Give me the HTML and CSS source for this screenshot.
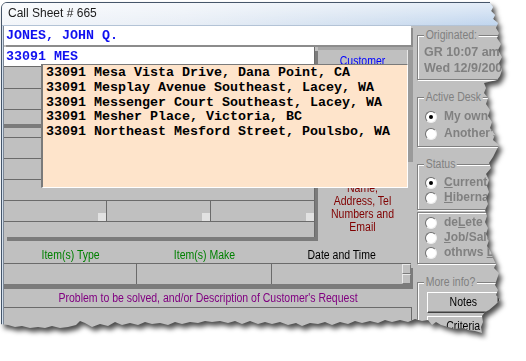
FILE: index.html
```html
<!DOCTYPE html>
<html>
<head>
<meta charset="utf-8">
<title>Call Sheet # 665</title>
<link rel="stylesheet" href="styles.css">
</head>
<body>
<div class="stage">
  <div class="window">
    <div class="frame">
      <div class="titlebar"><span class="title">Call Sheet # 665</span></div>
      <div class="client">
        <div class="main">
          <div class="name-field">JONES, JOHN Q.</div>
          <div class="row2">
            <div class="leftbox">
              <div class="addr-field">33091 MES</div>
              <div class="rows">
                <div class="r ra"></div>
                <div class="r rb"></div>
                <div class="r rc"></div>
                <div class="r band"></div>
                <div class="r rd"></div>
                <div class="r re"></div>
                <div class="r re"></div>
                <div class="r re"></div>
                <div class="r rh">
                  <div class="cell"><span class="sq"></span></div>
                  <div class="cell"><span class="sq"></span></div>
                  <div class="cell last"><span class="sq"></span></div>
                </div>
                <div class="r ri"></div>
              </div>
            </div>
            <div class="cust-panel">
              <div class="cust-text">
                <div class="cust-link">Customer</div>
                <div class="cust-desc">Name,<br>Address, Tel<br>Numbers and<br>Email</div>
              </div>
              <div class="cust-edge"></div>
            </div>
          </div>
          <div class="labels">
            <span class="lab l1 green"><span class="nw">Item(s) Type</span></span>
            <span class="lab l2 green"><span class="nw">Item(s) Make</span></span>
            <span class="lab l3"><span class="nw">Date and Time</span></span>
          </div>
          <div class="fields">
            <div class="fcell f1"></div>
            <div class="fcell f2"></div>
            <div class="fcell f3"><div class="spin"><span></span><span></span></div></div>
          </div>
          <div class="problem-label"><span class="nw">Problem to be solved, and/or Description of Customer's Request</span></div>
          <div class="problem-box"></div>
        </div>
        <div class="side">
          <div class="group g1">
            <span class="glabel">Originated:</span>
            <div class="orig">GR 10:07 am</div>
            <div class="orig">Wed 12/9/2009</div>
          </div>
          <div class="group g2">
            <span class="glabel">Active Desk</span>
            <div class="radio r17"><span class="dot on"></span><span class="rl">My own</span></div>
            <div class="radio r17"><span class="dot"></span><span class="rl">Another's</span></div>
          </div>
          <div class="group g3">
            <span class="glabel">Status</span>
            <div class="radio"><span class="dot on"></span><span class="rl"><u>C</u>urrent</span></div>
            <div class="radio"><span class="dot"></span><span class="rl"><u>H</u>ibernate</span></div>
          </div>
          <div class="group g4">
            <div class="radio"><span class="dot"></span><span class="rl">de<u>L</u>ete</span></div>
            <div class="radio"><span class="dot"></span><span class="rl"><u>J</u>ob/Sale</span></div>
            <div class="radio"><span class="dot"></span><span class="rl">othrws <u>D</u>one</span></div>
          </div>
          <div class="group g5">
            <span class="glabel">More info?</span>
            <div class="btn"><span class="nw">Notes</span></div>
            <div class="btn"><span class="nw">Criteria</span></div>
          </div>
        </div>
      </div>
      <div class="dropdown">
        <div class="opt">33091 Mesa Vista Drive, Dana Point, CA</div>
        <div class="opt">33091 Mesplay Avenue Southeast, Lacey, WA</div>
        <div class="opt">33091 Messenger Court Southeast, Lacey, WA</div>
        <div class="opt">33091 Mesher Place, Victoria, BC</div>
        <div class="opt">33091 Northeast Mesford Street, Poulsbo, WA</div>
      </div>
    </div>
  </div>
</div>
</body>
</html>
```

FILE: styles.css
```css
html, body {
  margin: 0;
  padding: 0;
  background: #fff;
}
body {
  width: 526px;
  height: 361px;
  overflow: hidden;
}
.stage {
  width: 526px;
  height: 361px;
  filter: drop-shadow(3px 4px 2.5px rgba(0, 0, 0, 0.7));
}
.window {
  width: 526px;
  height: 361px;
  box-sizing: border-box;
  padding: 2px 0 0 1px;
  clip-path: polygon(0px 0px, 490px 0px, 490px 3px, 493px 7px, 491px 11px, 495px 15px, 493px 19px, 498px 23px, 496px 28px, 499px 33px, 497px 38px, 501px 44px, 498px 50px, 502px 57px, 499px 63px, 502px 70px, 500px 76px, 497px 80px, 484px 83px, 486px 88px, 484px 93px, 488px 98px, 486px 104px, 490px 110px, 488px 116px, 492px 122px, 490px 128px, 495px 134px, 493px 140px, 499px 145px, 496px 151px, 493px 157px, 489px 163px, 491px 168px, 486px 174px, 489px 180px, 487px 186px, 489px 192px, 486px 198px, 488px 204px, 485px 210px, 487px 216px, 485px 222px, 488px 228px, 486px 234px, 489px 240px, 487px 246px, 491px 252px, 493px 258px, 496px 264px, 494px 268px, 499px 273px, 497px 279px, 495px 285px, 498px 290px, 496px 295px, 500px 300px, 495px 305px, 489px 310px, 485px 312px, 482px 316px, 483px 322px, 481px 327px, 482px 333px, 475px 331px, 468px 330px, 462px 328px, 455px 329px, 448px 327px, 441px 325px, 436px 322px, 432px 325px, 428px 320px, 422px 321px, 415px 319px, 408px 322px, 400px 320px, 392px 322px, 385px 320px, 378px 323px, 370px 321px, 362px 323px, 355px 321px, 348px 324px, 340px 322px, 332px 325px, 325px 322px, 318px 324px, 310px 323px, 302px 326px, 296px 323px, 288px 325px, 280px 322px, 272px 324px, 265px 322px, 258px 324px, 250px 321px, 242px 324px, 235px 321px, 228px 323px, 220px 321px, 212px 322px, 205px 321px, 198px 323px, 190px 322px, 182px 324px, 175px 322px, 168px 325px, 160px 323px, 152px 324px, 145px 322px, 138px 325px, 130px 323px, 122px 325px, 115px 322px, 108px 326px, 100px 324px, 92px 327px, 85px 323px, 80px 321px, 76px 325px, 68px 327px, 60px 328px, 52px 326px, 45px 328px, 38px 327px, 30px 328px, 22px 326px, 15px 327px, 8px 325px, 0px 324px);
}
.frame {
  position: relative;
  height: 100%;
  box-sizing: border-box;
  border: 1px solid #46566a;
  border-radius: 6px 6px 0 0;
  background: #c0c0c0;
  display: flex;
  flex-direction: column;
  overflow: hidden;
}
.titlebar {
  height: 23px;
  flex: none;
  box-sizing: border-box;
  border-bottom: 1px solid #b3c3d6;
  padding: 0 0 2px 6px;
  display: flex;
  align-items: center;
  background:
    linear-gradient(to bottom, rgba(255, 255, 255, 0.55), rgba(255, 255, 255, 0)),
    linear-gradient(to right, #f3f6fa 0%, #e8eef6 35%, #d2e0f0 70%, #bcd3ee 100%);
  font: 12px "Liberation Sans", Arial, sans-serif;
  color: #1b1b1b;
}
.client {
  flex: 1;
  display: flex;
  border-left: 1px solid #d3e0ee;
}
.main {
  width: 410px;
  flex: none;
  box-sizing: border-box;
  border-left: 1px solid #7d8896;
  display: flex;
  flex-direction: column;
}
.nw {
  display: inline-block;
  transform: scaleX(0.84);
  white-space: nowrap;
}
.name-field, .addr-field {
  box-sizing: border-box;
  height: 19px;
  padding-left: 2px;
  background: #fff;
  color: #1010f0;
  font: bold 13.33px/19px "Liberation Mono", monospace;
  white-space: pre;
}
.name-field {
  width: 407px;
  box-shadow: 2px 2px 0 #8c8c8c;
}
.row2 {
  display: flex;
  margin-top: 2px;
}
.leftbox {
  width: 311px;
  flex: none;
  box-sizing: border-box;
  border-right: 1px solid #6b6b6b;
  box-shadow: 3px 4px 0 #7b7b7b;
}
.rows {
  border-top: 1px solid #6b6b6b;
}
.r {
  box-sizing: border-box;
  border-bottom: 1px solid #6b6b6b;
}
.ra { height: 22px; }
.rb { height: 21px; }
.rc { height: 14px; border-bottom: 0; }
.band { height: 4px; background: #7b7b7b; border-bottom: 0; }
.rd { height: 10px; }
.re { height: 21px; }
.rh { height: 21px; display: flex; }
.ri { height: 15px; border-bottom: 0; }
.cell {
  width: 103px;
  box-sizing: border-box;
  border-right: 1px solid #6b6b6b;
  display: flex;
  justify-content: flex-end;
  align-items: flex-end;
}
.cell + .cell { width: 104px; }
.cell.last { flex: 1; border-right: 0; }
.sq {
  width: 8px;
  height: 8px;
  background: #e2e2e2;
}
.cust-panel {
  flex: 1;
  margin-left: 3px;
  border-top: 3px solid #a8a8a8;
  display: flex;
  align-items: flex-start;
}
.cust-text {
  flex: 1;
  text-align: center;
  font: 12.5px/13px "Liberation Sans", Arial, sans-serif;
  transform: scaleX(0.84);
}
.cust-link {
  padding-top: 5px;
  color: #0000ff;
}
.cust-desc {
  margin-top: 114px;
  color: #800000;
}
.cust-edge {
  width: 5px;
  height: 112px;
  background: #9a9a9a;
  border-left: 1px solid #e8e8e8;
}
.labels {
  height: 26px;
  display: flex;
  align-items: flex-end;
  box-sizing: border-box;
  padding-bottom: 1px;
  font: 12.5px/14px "Liberation Sans", Arial, sans-serif;
  color: #000;
}
.lab { text-align: center; }
.l1 { width: 133px; }
.l2 { width: 135px; }
.l3 { width: 139px; }
.green { color: #008000; }
.fields {
  width: 407px;
  height: 21px;
  box-sizing: border-box;
  border-top: 1px solid #6b6b6b;
  display: flex;
  box-shadow: 0 5px 0 #7b7b7b, 2px 5px 0 #7b7b7b;
}
.fcell {
  box-sizing: border-box;
  border-right: 1px solid #6b6b6b;
}
.f1 { width: 133px; }
.f2 { width: 135px; }
.f3 {
  flex: 1;
  border-right: 0;
  display: flex;
  justify-content: flex-end;
}
.spin {
  width: 9px;
  display: flex;
  flex-direction: column;
}
.spin span {
  height: 10px;
  box-sizing: border-box;
  border: 1px solid;
  border-color: #eaeaea #7b7b7b #7b7b7b #eaeaea;
}
.problem-label {
  margin-top: 5px;
  height: 18px;
  text-align: center;
  color: #800080;
  font: 12.5px/18px "Liberation Sans", Arial, sans-serif;
  white-space: nowrap;
}
.problem-box {
  flex: 1;
  width: 408px;
  box-sizing: border-box;
  border-top: 1px solid #6b6b6b;
  border-right: 1px solid #6b6b6b;
}
.side {
  flex: 1;
  padding-left: 4px;
  display: flex;
  flex-direction: column;
}
.group {
  position: relative;
  width: 100px;
  box-sizing: border-box;
  border: 1px solid #808080;
  box-shadow: inset 1px 1px 0 #fff, 1px 1px 0 #fff;
  flex: none;
}
.glabel {
  position: absolute;
  top: -8px;
  left: 6px;
  padding: 0 2px;
  background: #c0c0c0;
  color: #808080;
  font: 12.5px/14px "Liberation Sans", Arial, sans-serif;
  white-space: nowrap;
  transform: scaleX(0.84);
  transform-origin: left center;
}
.g1 { margin-top: 9px; height: 45px; padding: 8px 0 0 6px; }
.g2 { margin-top: 17px; height: 50px; padding: 10px 0 0 7px; }
.g3 { margin-top: 17px; height: 46px; padding: 10px 0 0 7px; }
.g4 { margin-top: 2px; height: 52px; padding: 2px 0 0 7px; }
.g5 { margin-top: 18px; height: 80px; padding: 9px 0 0 9px; }
.orig {
  font: bold 12.5px/16px "Liberation Sans", Arial, sans-serif;
  color: #808080;
  white-space: nowrap;
}
.radio {
  display: flex;
  align-items: center;
  gap: 7px;
  height: 15px;
  white-space: nowrap;
}
.radio.r17 { height: 17px; }
.dot {
  position: relative;
  width: 12px;
  height: 12px;
  flex: none;
  box-sizing: border-box;
  border-radius: 50%;
  border: 1px solid;
  border-color: #6e6e6e #eeeeee #eeeeee #6e6e6e;
  background: #fff;
}
.dot.on::after {
  content: "";
  position: absolute;
  left: 3px;
  top: 3px;
  width: 4px;
  height: 4px;
  border-radius: 50%;
  background: #000;
}
.rl {
  font: bold 12px/15px "Liberation Sans", Arial, sans-serif;
  color: #808080;
}
.btn {
  width: 72px;
  height: 21px;
  box-sizing: border-box;
  border: 1px solid;
  border-color: #fff #404040 #404040 #fff;
  box-shadow: inset -1px -1px 0 #808080;
  text-align: center;
  font: 12.5px/19px "Liberation Sans", Arial, sans-serif;
  color: #000;
  margin-bottom: 3px;
}
.dropdown {
  position: absolute;
  left: 39px;
  top: 61px;
  width: 367px;
  height: 124px;
  box-sizing: border-box;
  border-style: solid;
  border-width: 1px 1px 1px 2px;
  border-color: #7a7a7a #fff #fff #7a7a7a;
  background: #fee4cb;
  padding: 1px 0 0 3px;
  font: bold 13.33px/14.75px "Liberation Mono", monospace;
  color: #000;
}
.opt {
  white-space: pre;
}
```
